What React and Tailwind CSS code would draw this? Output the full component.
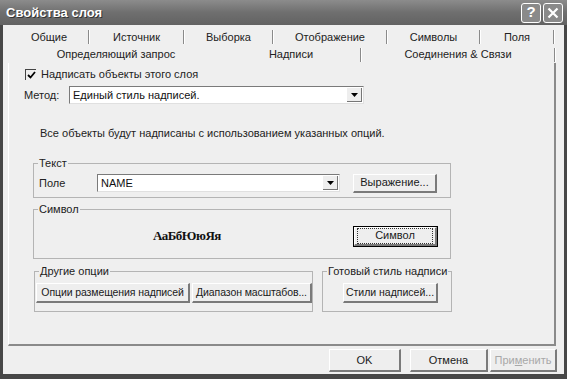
import { useState } from 'react';

const font = { fontFamily: '"Liberation Sans", Arial, sans-serif' };

function Btn({ children, className = '', disabled = false, focused = false }) {
  return (
    <div
      className={`flex items-center justify-center whitespace-nowrap bg-[#eeeeee] border-t border-l border-t-white border-l-white border-r-[2px] border-b-[2px] border-r-[#7a7a7a] border-b-[#7a7a7a] ${
        disabled ? 'text-[#a8a8a8]' : 'text-[#1a1a1a]'
      } ${focused ? 'outline outline-1 outline-black' : ''} ${className}`}
    >
      {focused ? (
        <span className="m-[2px] flex h-full w-full items-center justify-center border border-dotted border-[#333]">
          {children}
        </span>
      ) : (
        children
      )}
    </div>
  );
}

function Select({ value, className = '' }) {
  return (
    <div
      className={`flex items-center bg-white border-t border-l border-t-[#7a7a7a] border-l-[#7a7a7a] border-r border-b border-r-[#e0e0e0] border-b-[#e0e0e0] ${className}`}
    >
      <span className="flex-1 pl-[3px] text-[11px] text-[#111]">{value}</span>
      <span className="mr-[1px] flex h-[14px] w-[15px] items-center justify-center bg-[#eeeeee] border-r border-b border-r-[#777] border-b-[#777]">
        <svg width="7" height="4" viewBox="0 0 7 4">
          <path d="M0 0h7L3.5 4z" fill="#000" />
        </svg>
      </span>
    </div>
  );
}

function Group({ title, className = '', children }) {
  return (
    <fieldset className={`border border-[#b4b4b4] ${className}`}>
      <legend className="ml-[4px] px-[1px] text-[11px] leading-[13px] text-[#222]">{title}</legend>
      {children}
    </fieldset>
  );
}

const row1 = [
  { label: 'Общие', w: 'w-[80px]' },
  { label: 'Источник', w: 'w-[95px]' },
  { label: 'Выборка', w: 'w-[89px]' },
  { label: 'Отображение', w: 'w-[114px]' },
  { label: 'Символы', w: 'w-[93px]' },
  { label: 'Поля', w: 'w-[74px]' },
];

export default function App() {
  const [checked] = useState(true);

  return (
    <div className="flex h-[379px] w-[567px] flex-col bg-[#474747]" style={font}>
      {/* title bar */}
      <div className="flex h-[25px] items-center bg-gradient-to-b from-[#8c8c8c] via-[#6f6f6f] to-[#626262] pl-[6px] pr-[4px]">
        <span className="flex-1 text-[13px] font-bold text-white [text-shadow:1px_1px_0_#333]">
          Свойства слоя
        </span>
        <div className="flex gap-[2px]">
          <span className="flex h-[20px] w-[20px] items-center justify-center rounded-[3px] border border-white bg-[#8a8a8a] text-[15px] font-bold text-white">
            ?
          </span>
          <span className="flex h-[20px] w-[20px] items-center justify-center rounded-[3px] border border-white bg-[#8a8a8a]">
            <svg width="12" height="12" viewBox="0 0 12 12">
              <path d="M1.5 1.5l9 9M10.5 1.5l-9 9" stroke="#fff" strokeWidth="2.2" />
            </svg>
          </span>
        </div>
      </div>

      {/* body */}
      <div className="mx-[3px] mb-[5px] flex flex-1 flex-col bg-[#efefef] text-[11px] text-[#222]">
        {/* tabs */}
        <div className="pl-[7px] pt-[3px]">
          <div className="flex h-[18px]">
            {row1.map((t) => (
              <div key={t.label} className={`flex items-center ${t.w}`}>
                <span className="flex-1 text-center">{t.label}</span>
                <span className="h-[14px] w-[1px] bg-[#8a8a8a]" />
                <span className="h-[14px] w-[1px] bg-white" />
              </div>
            ))}
          </div>
          <div className="flex h-[17px]">
            <div className="flex w-[212px] items-center justify-center">Определяющий запрос</div>
            <div className="flex w-[140px] items-center">
              <span className="flex-1 text-center">Надписи</span>
              <span className="h-[14px] w-[1px] bg-[#8a8a8a]" />
              <span className="h-[14px] w-[1px] bg-white" />
            </div>
            <div className="flex w-[194px] items-center">
              <span className="flex-1 text-center">Соединения &amp; Связи</span>
              <span className="h-[14px] w-[1px] bg-[#8a8a8a]" />
              <span className="h-[14px] w-[1px] bg-white" />
            </div>
          </div>
        </div>

        {/* panel */}
        <div className="ml-[5px] flex h-[283px] w-[548px] flex-col border-l border-l-white border-r-[2px] border-b-[2px] border-r-[#8a8a8a] border-b-[#8a8a8a] pl-[15px]">
          <div className="mt-[4px] flex h-[14px] items-center gap-[5px] pl-[1px]">
            <span className="flex h-[11px] w-[11px] items-center justify-center border-l border-t border-[#444]">
              {checked && (
                <svg width="9" height="8" viewBox="0 0 9 8">
                  <path d="M1 4l2.5 2.5L8 1" fill="none" stroke="#000" strokeWidth="1.8" />
                </svg>
              )}
            </span>
            <span>Надписать объекты этого слоя</span>
          </div>

          <div className="mt-[5px] flex h-[18px] items-center">
            <span className="w-[45px]">Метод:</span>
            <Select value="Единый стиль надписей." className="h-[18px] w-[295px]" />
          </div>

          <div className="mt-[22px] flex h-[14px] items-center pl-[16px]">
            Все объекты будут надписаны с использованием указанных опций.
          </div>

          <Group title="Текст" className="ml-[9px] mt-[17px] h-[41px] w-[418px]">
            <div className="flex h-[26px] items-center pl-[5px]">
              <span className="w-[58px]">Поле</span>
              <Select value="NAME" className="h-[18px] w-[243px]" />
              <Btn className="ml-[13px] h-[19px] w-[84px] text-[11px]">Выражение...</Btn>
            </div>
          </Group>

          <Group title="Символ" className="ml-[9px] mt-[5px] h-[56px] w-[418px]">
            <div className="flex h-[40px] items-center">
              <span
                className="ml-[119px] w-[200px] text-[13px] font-bold tracking-[-0.5px] text-[#111]"
                style={{ fontFamily: '"Liberation Serif", "Times New Roman", serif' }}
              >
                АаБбЮюЯя
              </span>
              <Btn focused className="ml-[1px] h-[19px] w-[83px] text-[11px]">Символ</Btn>
            </div>
          </Group>

          <div className="ml-[10px] mt-[6px] flex gap-[9px]">
            <Group title="Другие опции" className="h-[47px] w-[279px]">
              <div className="flex h-[30px] items-center gap-[2px] pl-[1px]">
                <Btn className="h-[20px] w-[154px] text-[10.5px] tracking-[-0.1px]">Опции размещения надписей</Btn>
                <Btn className="h-[20px] w-[120px] text-[10.5px] tracking-[-0.1px]">Диапазон масштабов...</Btn>
              </div>
            </Group>
            <Group title="Готовый стиль надписи" className="h-[47px] w-[130px]">
              <div className="flex h-[30px] items-center pl-[20px]">
                <Btn className="h-[20px] w-[95px] text-[10.5px]">Стили надписей...</Btn>
              </div>
            </Group>
          </div>
        </div>

        {/* footer */}
        <div className="mt-[3px] flex h-[23px] pl-[326px]">
          <Btn className="h-[23px] w-[72px] text-[11px]">OK</Btn>
          <Btn className="ml-[9px] h-[23px] w-[78px] text-[11px]">Отмена</Btn>
          <Btn disabled className="ml-[2px] h-[23px] w-[67px] text-[11px]">
            <span>
              При<span className="underline">м</span>енить
            </span>
          </Btn>
        </div>
      </div>
    </div>
  );
}
